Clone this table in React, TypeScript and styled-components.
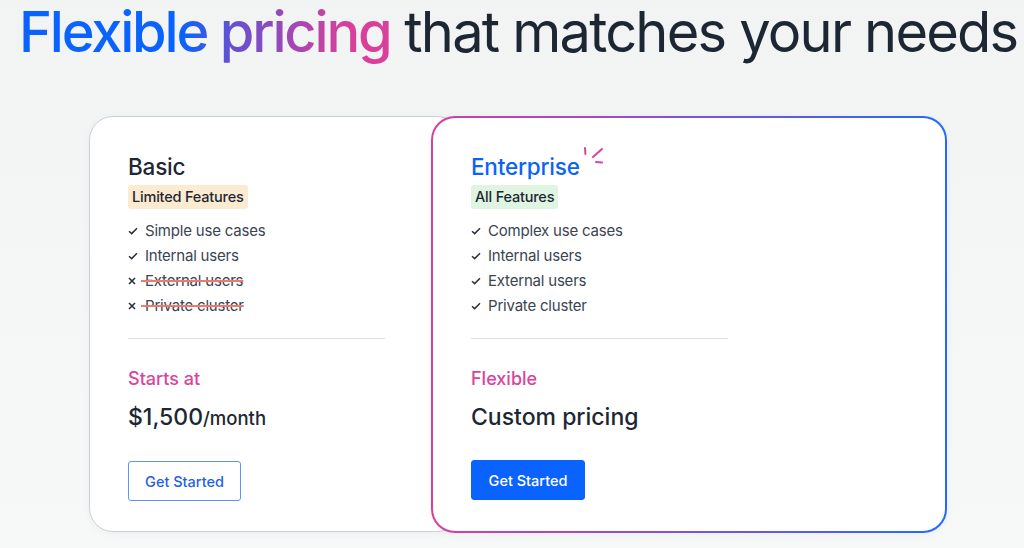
import * as React from "react";
import styled, { createGlobalStyle } from "styled-components";

const colors = {
  blue: "#0a62ff",
  pink: "#d9459d",
  ink: "#1d2734",
  text: "#3a4452",
  rule: "#dcdfe4",
  strike: "#f0796d"
};

const GlobalStyle = createGlobalStyle`
  html, body {
    margin: 0;
    padding: 0;
  }
  body {
    background: linear-gradient(180deg, #f2f3f3 0%, #f7f8f8 100%);
    font-family: Inter, "Noto Sans", sans-serif;
    color: ${colors.ink};
    width: 1024px;
    height: 548px;
    overflow: hidden;
  }
`;

const Page = styled.div`
  display: flex;
  flex-direction: column;
  padding: 0 0 0 19px;
`;

const Headline = styled.h1`
  margin: 0;
  font-size: 56px;
  font-weight: 400;
  line-height: 64px;
  letter-spacing: -1.8px;
  white-space: nowrap;
  color: ${colors.ink};
`;

const Accent = styled.span`
  font-weight: 500;
  letter-spacing: -2.2px;
  background: linear-gradient(90deg, #0a62ff 0%, #0a62ff 44%, #6750d0 58%, #d8409c 88%);
  -webkit-background-clip: text;
  background-clip: text;
  color: transparent;
`;

const Cards = styled.div`
  display: flex;
  align-items: flex-start;
  margin: 52px 0 0 70px;
`;

const Card = styled.div<{ featured?: boolean }>`
  position: relative;
  box-sizing: border-box;
  display: flex;
  flex-direction: column;
  border-radius: 24px;
  padding: ${(p) => (p.featured ? "34px 38px 29px" : "35px 38px 29px")};
  width: ${(p) => (p.featured ? "516px" : "372px")};
  height: ${(p) => (p.featured ? "417px" : "416px")};
  margin-left: ${(p) => (p.featured ? "-30px" : "0")};
  border: ${(p) => (p.featured ? "2px solid transparent" : "1px solid #c9cfd9")};
  background: ${(p) =>
    p.featured
      ? "linear-gradient(#fff, #fff) padding-box, linear-gradient(90deg, #d83f9c 0%, #8a4fd6 45%, #1f6bff 100%) border-box"
      : "#fff"};
  box-shadow: 0 2px 10px rgba(20, 30, 50, 0.04);
`;

const TitleRow = styled.div`
  position: relative;
  display: flex;
  align-items: flex-start;
`;

const Title = styled.h2<{ color: string }>`
  margin: 0;
  font-size: 22.5px;
  font-weight: 500;
  line-height: 30px;
  letter-spacing: -0.2px;
  color: ${(p) => p.color};
`;

const Sparkle = styled.svg`
  position: absolute;
  left: 110px;
  top: -6px;
`;

const Badge = styled.span<{ tone: string }>`
  align-self: flex-start;
  margin-top: 3px;
  padding: 0 4px;
  height: 24px;
  line-height: 24px;
  border-radius: 3px;
  background: ${(p) => p.tone};
  font-size: 14.5px;
  font-weight: 500;
  letter-spacing: -0.2px;
  color: ${colors.ink};
`;

const List = styled.ul`
  list-style: none;
  margin: 9px 0 0;
  padding: 0;
  display: flex;
  flex-direction: column;
`;

const Item = styled.li`
  display: flex;
  align-items: center;
  height: 25px;
  font-size: 15px;
  letter-spacing: -0.2px;
  color: ${colors.text};
`;

const Mark = styled.span`
  display: flex;
  width: 17px;
  flex: 0 0 17px;
  color: #2a323d;
`;

const Struck = styled.span`
  text-decoration: line-through;
  text-decoration-color: ${colors.strike};
  text-decoration-thickness: 1.5px;
  margin-left: -4px;
`;

const Rule = styled.hr`
  margin: 20px 0 0;
  width: 257px;
  border: 0;
  border-top: 1px solid ${colors.rule};
`;

const PriceLabel = styled.div`
  margin-top: 28px;
  font-size: 18px;
  font-weight: 500;
  line-height: 24px;
  color: ${colors.pink};
`;

const Price = styled.div`
  margin-top: 11px;
  font-size: 23px;
  font-weight: 500;
  line-height: 30px;
  color: ${colors.ink};
`;

const Per = styled.span`
  font-size: 18.5px;
  font-weight: 500;
`;

const Button = styled.button<{ solid?: boolean }>`
  align-self: flex-start;
  margin-top: 28px;
  box-sizing: border-box;
  width: ${(p) => (p.solid ? "114px" : "113px")};
  height: 40px;
  border-radius: 3px;
  font-family: inherit;
  font-size: 14.5px;
  font-weight: 500;
  cursor: pointer;
  border: 1px solid ${(p) => (p.solid ? colors.blue : "#5d93f6")};
  background: ${(p) => (p.solid ? colors.blue : "#fff")};
  color: ${(p) => (p.solid ? "#fff" : "#1f62e6")};
`;

const Check = () => (
  <svg width="10" height="8" viewBox="0 0 10 8">
    <path d="M1 4.2 L3.7 6.6 L9 1.2" fill="none" stroke="currentColor" strokeWidth="1.5" />
  </svg>
);

const Cross = () => (
  <svg width="8" height="8" viewBox="0 0 8 8">
    <path d="M1 1 L7 7 M7 1 L1 7" fill="none" stroke="currentColor" strokeWidth="1.6" />
  </svg>
);

type Feature = { label: string; included: boolean };

const basicFeatures: Feature[] = [
  { label: "Simple use cases", included: true },
  { label: "Internal users", included: true },
  { label: "External users", included: false },
  { label: "Private cluster", included: false }
];

const enterpriseFeatures: Feature[] = [
  { label: "Complex use cases", included: true },
  { label: "Internal users", included: true },
  { label: "External users", included: true },
  { label: "Private cluster", included: true }
];

const Features = ({ items }: { items: Feature[] }) => (
  <List>
    {items.map((f) => (
      <Item key={f.label}>
        <Mark>{f.included ? <Check /> : <Cross />}</Mark>
        {f.included ? f.label : <Struck>{"\u00a0" + f.label}</Struck>}
      </Item>
    ))}
  </List>
);

export default function App() {
  return (
    <>
      <GlobalStyle />
      <Page>
        <Headline>
          <Accent>Flexible pricing</Accent> that matches your needs
        </Headline>
        <Cards>
          <Card>
            <TitleRow>
              <Title color={colors.ink}>Basic</Title>
            </TitleRow>
            <Badge tone="#fdebd1">Limited Features</Badge>
            <Features items={basicFeatures} />
            <Rule />
            <PriceLabel>Starts at</PriceLabel>
            <Price>
              $1,500<Per>/month</Per>
            </Price>
            <Button>Get Started</Button>
          </Card>
          <Card featured>
            <TitleRow>
              <Title color="#0b63f6">Enterprise</Title>
              <Sparkle width="26" height="24" viewBox="0 0 26 24">
                <g stroke={colors.pink} strokeWidth="2" strokeLinecap="round" fill="none">
                  <path d="M4 2 L4.4 8" />
                  <path d="M12 11 L21 3" />
                  <path d="M15 16 L21 16.6" />
                </g>
              </Sparkle>
            </TitleRow>
            <Badge tone="#dff5e2">All Features</Badge>
            <Features items={enterpriseFeatures} />
            <Rule />
            <PriceLabel>Flexible</PriceLabel>
            <Price>Custom pricing</Price>
            <Button solid>Get Started</Button>
          </Card>
        </Cards>
      </Page>
    </>
  );
}
